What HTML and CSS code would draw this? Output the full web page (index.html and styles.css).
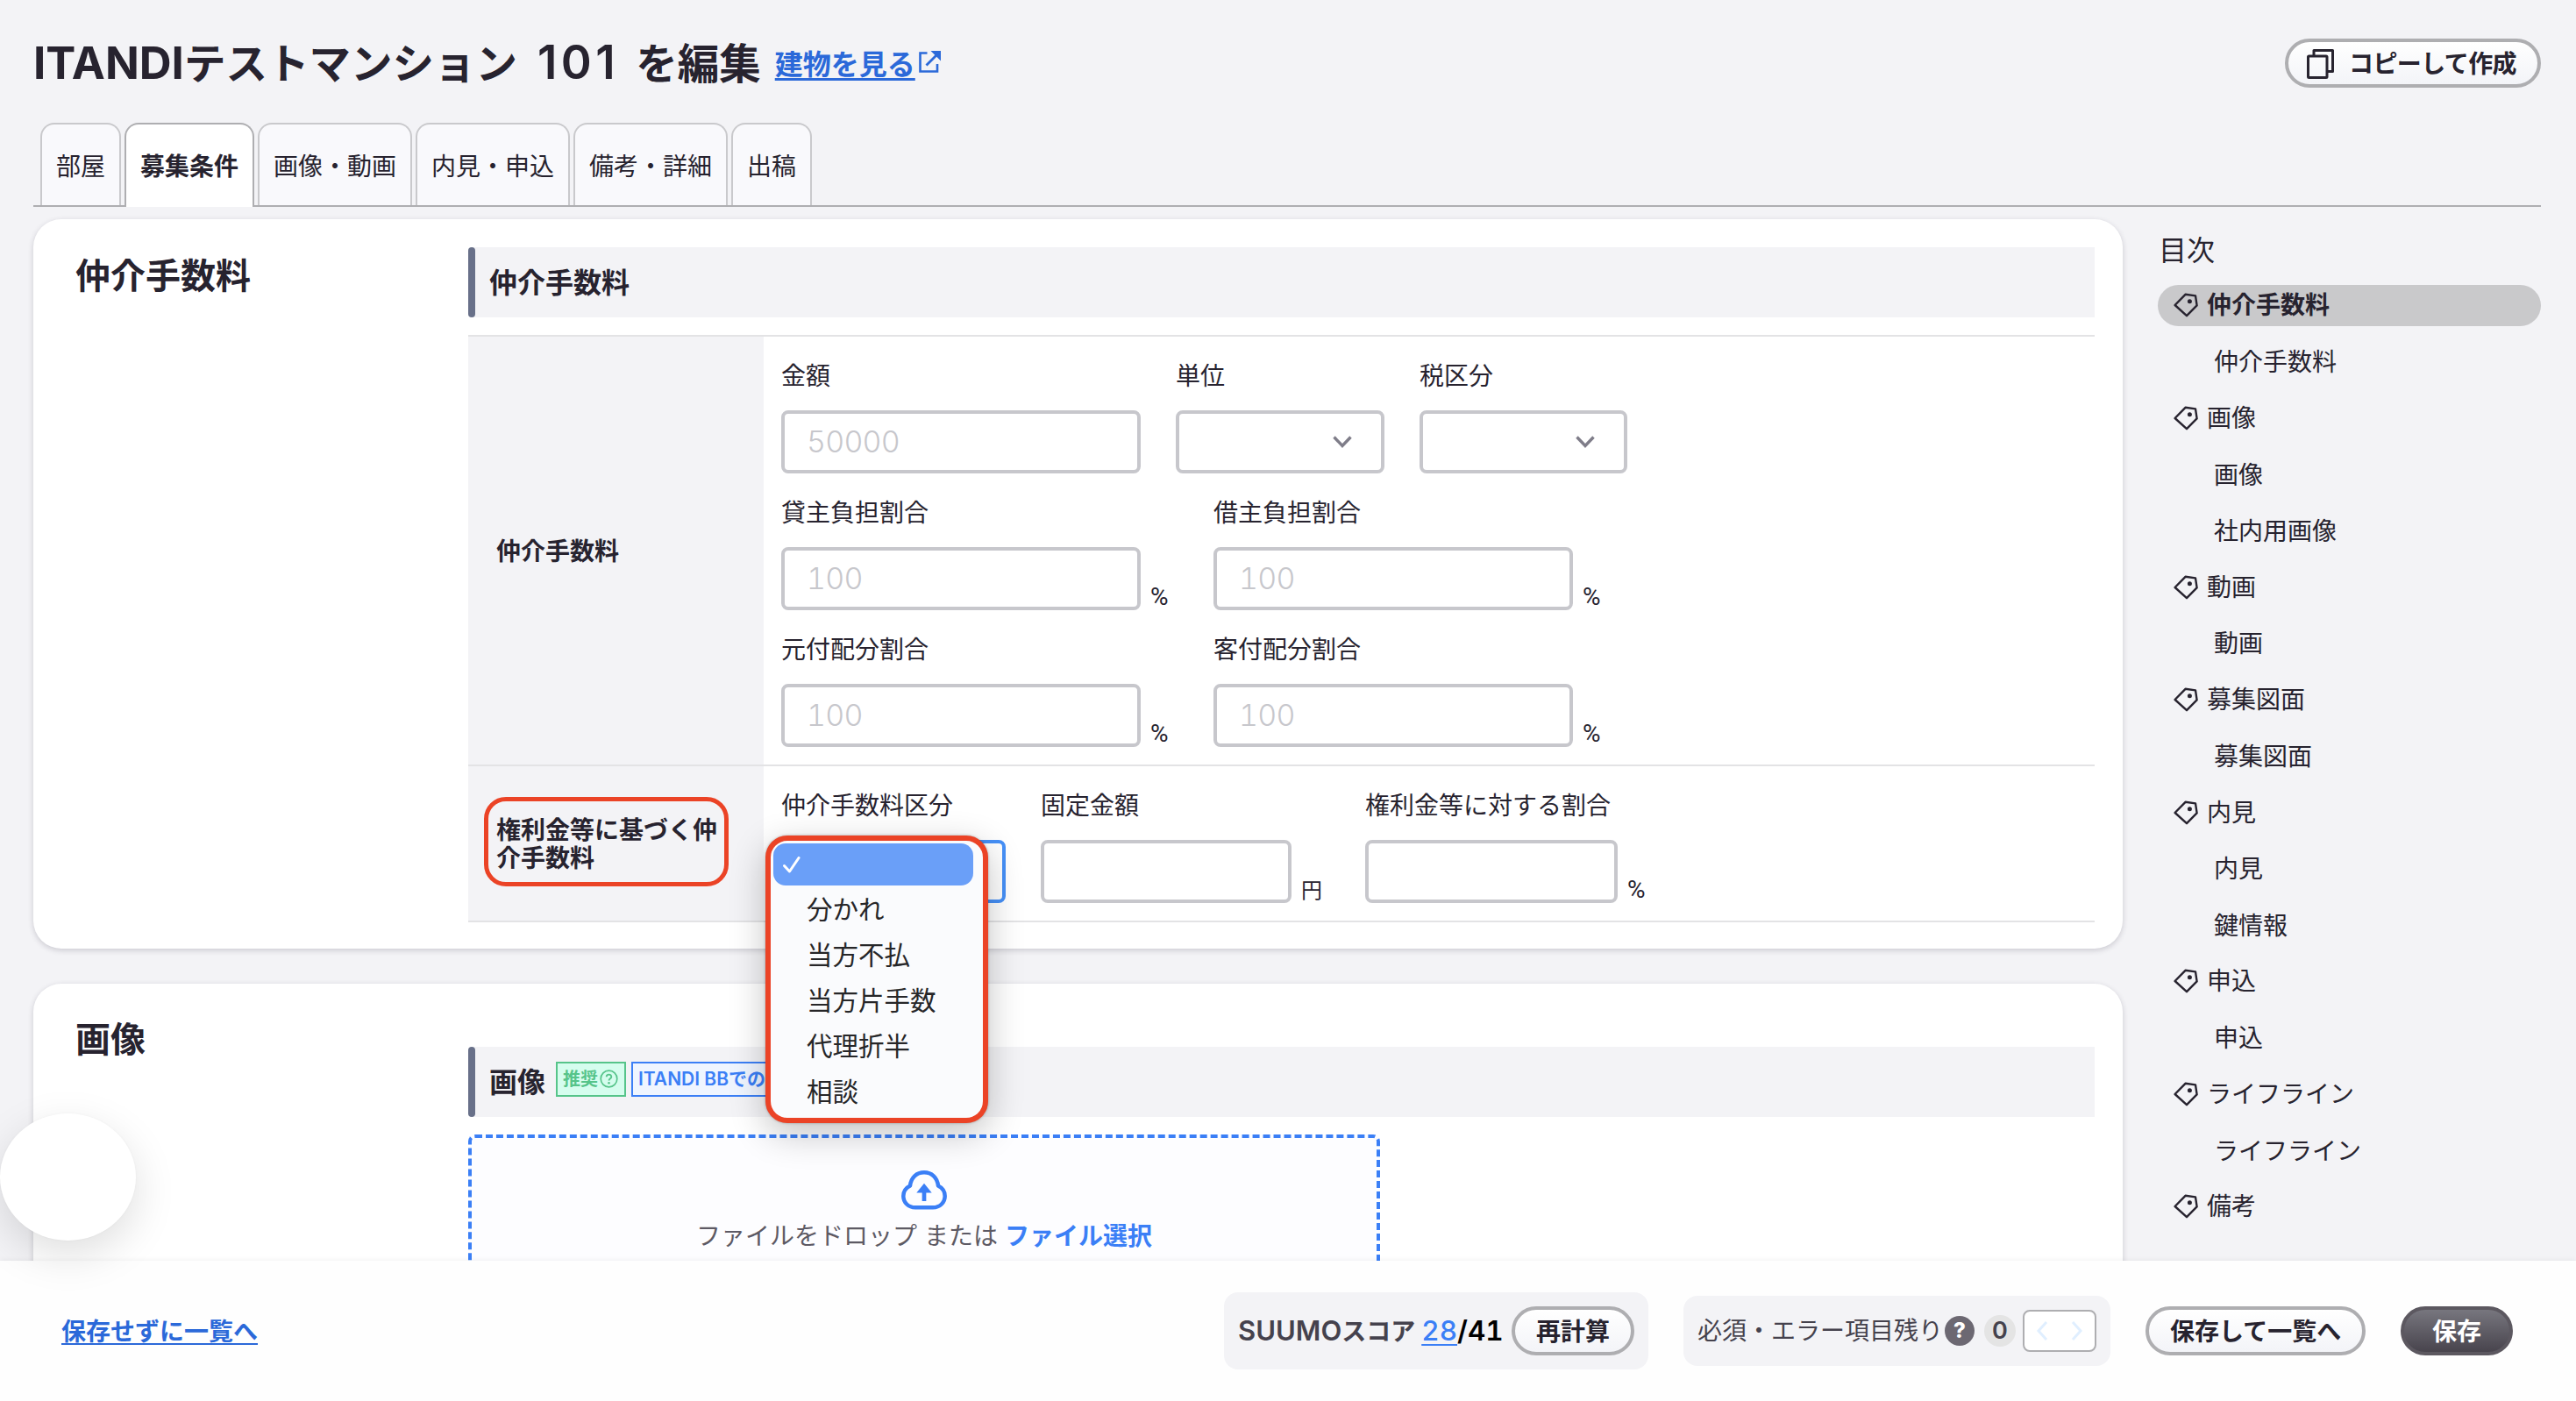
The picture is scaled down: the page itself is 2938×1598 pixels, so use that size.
FILE: index.html
```html
<!DOCTYPE html>
<html lang="ja">
<head>
<meta charset="utf-8">
<title>ITANDIテストマンション 101 を編集</title>
<link rel="stylesheet" href="styles.css">
</head>
<body>
<svg class="sprite" width="0" height="0" aria-hidden="true">
  <symbol id="tag" viewBox="0 0 28 28"><path d="M1.6 14 13.5 1.8 25 3.4 26.6 14.4 15 26.2Z" fill="none" stroke="currentColor" stroke-width="2.4" stroke-linejoin="round"/><circle cx="18.4" cy="9.8" r="2.5" fill="currentColor"/></symbol>
  <symbol id="chevron" viewBox="0 0 24 16"><path d="M2.5 2.5 12 12.5 21.500 2.500" fill="none" stroke="currentColor" stroke-width="3.4"/></symbol>
</svg>

<div class="page">
  <header class="header">
    <h1 class="title"><span class="title-latin">ITANDI</span>テストマンション<span class="title-number">101</span>を編集</h1>
    <a class="building-link"><span>建物を見る</span><svg width="25" height="25" viewBox="0 0 25 25"><path d="M9.500 2.500H1.500V23.500H21V15" fill="none" stroke="currentColor" stroke-width="2.600"/><path d="M8.500 16.500 21 4" fill="none" stroke="currentColor" stroke-width="2.800"/><path d="M13.500 0H25V11.500Z" fill="currentColor"/></svg></a>
    <button class="button copy-button"><svg width="31" height="34" viewBox="0 0 31 34"><path d="M8 7V1.500H29.500V25.500H24" fill="none" stroke="currentColor" stroke-width="3" stroke-linejoin="round"/><rect x="1.500" y="8" width="21.500" height="24.500" rx="1" fill="none" stroke="currentColor" stroke-width="3"/></svg>コピーして作成</button>
  </header>

  <nav class="tabs">
    <a class="tab">部屋</a>
    <a class="tab active">募集条件</a>
    <a class="tab">画像・動画</a>
    <a class="tab">内見・申込</a>
    <a class="tab">備考・詳細</a>
    <a class="tab">出稿</a>
  </nav>

  <div class="content">
    <main class="cards">
      <section class="card fee-card">
        <h2 class="card-title">仲介手数料</h2>
        <div class="card-body">
          <h3 class="section-title">仲介手数料</h3>
          <div class="table">
            <div class="row">
              <div class="row-label">仲介手数料</div>
              <div class="row-fields">
                <div class="fields fields-amount">
                  <div class="field"><label>金額</label><div class="input">50000</div></div>
                  <div class="field"><label>単位</label><div class="input select"><svg class="chevron"><use href="#chevron"/></svg></div></div>
                  <div class="field"><label>税区分</label><div class="input select"><svg class="chevron"><use href="#chevron"/></svg></div></div>
                </div>
                <div class="fields fields-ratio">
                  <div class="field"><label>貸主負担割合</label><div class="with-unit"><div class="input">100</div><span class="unit">%</span></div></div>
                  <div class="field"><label>借主負担割合</label><div class="with-unit"><div class="input">100</div><span class="unit">%</span></div></div>
                </div>
                <div class="fields fields-ratio">
                  <div class="field"><label>元付配分割合</label><div class="with-unit"><div class="input">100</div><span class="unit">%</span></div></div>
                  <div class="field"><label>客付配分割合</label><div class="with-unit"><div class="input">100</div><span class="unit">%</span></div></div>
                </div>
              </div>
            </div>
            <div class="row">
              <div class="row-label"><span class="callout"></span>権利金等に基づく仲<br>介手数料</div>
              <div class="row-fields">
                <div class="fields fields-key">
                  <div class="field">
                    <label>仲介手数料区分</label>
                    <div class="input focused"></div>
                    <ul class="menu">
                      <li class="selected"><svg width="20" height="19" viewBox="0 0 20 19"><path d="M1.500 10.500 7.500 17 18 1.500" fill="none" stroke="#fff" stroke-width="3" stroke-linecap="round" stroke-linejoin="round"/></svg></li>
                      <li>分かれ</li>
                      <li>当方不払</li>
                      <li>当方片手数</li>
                      <li>代理折半</li>
                      <li>相談</li>
                    </ul>
                  </div>
                  <div class="field"><label>固定金額</label><div class="with-unit"><div class="input fixed"></div><span class="unit yen">円</span></div></div>
                  <div class="field"><label>権利金等に対する割合</label><div class="with-unit"><div class="input rate"></div><span class="unit">%</span></div></div>
                </div>
              </div>
            </div>
          </div>
        </div>
      </section>

      <section class="card image-card">
        <h2 class="card-title">画像</h2>
        <div class="card-body">
          <h3 class="section-title">画像
            <span class="badge green">推奨<svg width="21" height="21" viewBox="0 0 21 21"><circle cx="10.500" cy="10.500" r="9.300" fill="none" stroke="currentColor" stroke-width="1.700"/><path d="M7.700 8.300C7.700 4.800 13.300 4.800 13.300 8.200 13.300 10.200 10.500 10.300 10.500 12.500" fill="none" stroke="currentColor" stroke-width="1.900"/><circle cx="10.500" cy="15.200" r="1.300" fill="currentColor"/></svg></span>
            <span class="badge blue">ITANDI BBでの</span>
          </h3>
          <div class="dropzone">
            <svg width="52" height="45" viewBox="0 0 52 45"><path d="M16 42.300C8 42.300 2.300 36.500 2.300 29.300 2.300 24.300 5 20 10 17.500 11 8 17.500 2.300 26 2.300S41 8 42 17.500C47 20 49.700 24.300 49.700 29.300 49.700 36.500 44 42.300 36 42.300Z" fill="none" stroke="currentColor" stroke-width="4.500" stroke-linejoin="round"/><path d="M26 35V23" stroke="currentColor" stroke-width="4.700"/><path d="M17.300 25.500 26 14.700 34.700 25.500Z" fill="currentColor"/></svg>
            <p>ファイルをドロップ または <b>ファイル選択</b></p>
          </div>
        </div>
      </section>
    </main>

    <aside class="toc">
      <h2 class="toc-title">目次</h2>
      <a class="toc-item active"><svg><use href="#tag"/></svg>仲介手数料</a>
      <a class="toc-item sub">仲介手数料</a>
      <a class="toc-item"><svg><use href="#tag"/></svg>画像</a>
      <a class="toc-item sub">画像</a>
      <a class="toc-item sub">社内用画像</a>
      <a class="toc-item"><svg><use href="#tag"/></svg>動画</a>
      <a class="toc-item sub">動画</a>
      <a class="toc-item"><svg><use href="#tag"/></svg>募集図面</a>
      <a class="toc-item sub">募集図面</a>
      <a class="toc-item"><svg><use href="#tag"/></svg>内見</a>
      <a class="toc-item sub">内見</a>
      <a class="toc-item sub">鍵情報</a>
      <a class="toc-item"><svg><use href="#tag"/></svg>申込</a>
      <a class="toc-item sub">申込</a>
      <a class="toc-item"><svg><use href="#tag"/></svg>ライフライン</a>
      <a class="toc-item sub">ライフライン</a>
      <a class="toc-item"><svg><use href="#tag"/></svg>備考</a>
    </aside>
  </div>
</div>

<footer class="footer">
  <a class="leave-link">保存せずに一覧へ</a>
  <div class="panel score">
    <span class="score-name">SUUMO<span>スコア</span></span>
    <span class="score-value"><a>28</a>/41</span>
    <button class="button">再計算</button>
  </div>
  <div class="panel errors">
    <span>必須・エラー項目残り</span>
    <span class="help">?</span>
    <span class="count">0</span>
    <span class="pager"><svg width="14" height="22" viewBox="0 0 14 22"><path d="M12 1 3 11 12 21" fill="none" stroke="currentColor" stroke-width="3"/></svg><svg width="14" height="22" viewBox="0 0 14 22"><path d="M2 1 11 11 2 21" fill="none" stroke="currentColor" stroke-width="3"/></svg></span>
  </div>
  <button class="button save-list">保存して一覧へ</button>
  <button class="button dark">保存</button>
</footer>
<div class="bubble"></div>
</body>
</html>
```

FILE: styles.css
```css
* { box-sizing: border-box; }

body {
  margin: 0;
  height: 1598px;
  display: flex;
  flex-direction: column;
  overflow: hidden;
  background: #f3f3f6;
  color: #27232f;
  font-family: Inter, "Noto Sans CJK JP", sans-serif;
  font-size: 28px;
  line-height: 40px;
}

h1, h2, h3, p, ul { margin: 0; padding: 0; }
svg { display: block; flex: none; }
.sprite { position: absolute; }

.page {
  height: 1438px;
  flex: none;
  padding: 44px 40px 0 38px;
  overflow: hidden;
}

/* Header */
.header { display: flex; align-items: center; height: 56px; }
.title { font-size: 47.5px; line-height: 56px; font-weight: 700; white-space: nowrap; }
.title-latin { font-size: 51px; }
.title-number { font-size: 53px; font-weight: 600; letter-spacing: 4.5px; margin: 0 19px 0 23px; }
.building-link {
  display: flex;
  gap: 4px;
  margin-left: 16px;
  padding-top: 4px;
  color: #2b69d9;
  font-size: 32px;
  font-weight: 700;
}
.building-link svg { margin-top: 4px; }
.building-link span { text-decoration: underline; text-decoration-thickness: 3px; text-underline-offset: 4px; }

.button {
  height: 56px;
  padding: 1px 24px 0;
  border: 4px solid #aeaeb1;
  border-radius: 28px;
  background: linear-gradient(#fff, #f3f4f8);
  color: #27232f;
  font: 700 28px/40px Inter, "Noto Sans CJK JP", sans-serif;
  white-space: nowrap;
}
.copy-button {
  display: flex;
  align-items: center;
  gap: 17px;
  width: 292px;
  margin-left: auto;
  padding: 1px 0 0 21px;
  letter-spacing: -.6px;
}

/* Tabs */
.tabs {
  display: flex;
  gap: 4px;
  height: 96px;
  margin-top: 40px;
  padding-left: 8px;
  border-bottom: 2px solid #aeaeb1;
}
.tab {
  height: 94px;
  padding: 0 16px;
  border: 2px solid #c9c9cc;
  border-bottom: 0;
  border-radius: 16px 16px 0 0;
  background: #f9f9fc;
  line-height: 96px;
}
.tab.active { height: 96px; background: #fff; border-color: #aeaeb1; font-weight: 700; }

/* Cards */
.content { display: flex; gap: 40px; margin-top: 14px; }
.cards { display: flex; flex-direction: column; gap: 40px; width: 2383px; }
.card {
  display: flex;
  border-radius: 32px;
  background: #fff;
  box-shadow: 0 2px 6px rgba(39, 35, 60, .2);
}
.fee-card { height: 832px; padding: 32px 32px 0 48px; }
.image-card { height: 500px; padding: 32px 32px 0 48px; }
.image-card .card-body { padding-top: 40px; }
.image-card .card-title { line-height: 64px; }
.card-title { width: 448px; font-size: 40px; line-height: 65px; font-weight: 700; }
.card-body { flex: 1; }
.section-title {
  display: flex;
  align-items: center;
  height: 80px;
  padding: 1px 0 0 24px;
  background: linear-gradient(90deg, #fff 4px, #f3f3f6 4px);
  font-size: 32px;
  font-weight: 700;
  position: relative;
}
.section-title::before {
  content: "";
  position: absolute;
  left: 0;
  top: 0;
  width: 8px;
  height: 80px;
  border-radius: 4px;
  background: #687089;
}

.table { margin-top: 20px; border-top: 2px solid #e3e3e5; }
.row { display: flex; border-bottom: 2px solid #e3e3e5; }
.row-label {
  position: relative;
  width: 337px;
  padding: 1px 0 0 32px;
  background: #f3f3f6;
  font-weight: 700;
  line-height: 32px;
  display: grid;
  align-content: center;
  white-space: nowrap;
}
.row-fields { display: flex; flex-direction: column; gap: 24px; padding: 24px 0 20px 20px; }
.fields { display: grid; }
.fields-amount { grid-template-columns: 410px 238px 237px; gap: 40px; }
.fields-ratio { grid-template-columns: 493px auto; }
.fields-ratio .input { width: 410px; }
.fields-key { grid-template-columns: 296px 370px auto; }
.field { position: relative; }
.field label { display: block; height: 40px; margin-bottom: 20px; line-height: 42px; white-space: nowrap; }
.input {
  height: 72px;
  padding-left: 25px;
  border: 4px solid #c7c7cc;
  border-radius: 8px;
  background: #fff;
  color: #c7c7cc;
  font-size: 34px;
  font-weight: 300;
  line-height: 64px;
  letter-spacing: -.8px;
  font-variant-numeric: tabular-nums;
}
.select { display: flex; align-items: center; justify-content: flex-end; padding-right: 32px; }
.chevron { width: 24px; height: 16px; color: #7f7d89; }
.focused { width: 256px; border-color: #4690f7; }
.fixed { width: 286px; }
.rate { width: 288px; }
.with-unit { display: flex; gap: 11px; align-items: flex-end; }
.unit { font-family: Roboto, sans-serif; font-size: 28px; line-height: 30px; }
.yen { font-family: "Noto Sans CJK JP", sans-serif; font-size: 24px; line-height: 32px; }

.callout {
  position: absolute;
  left: 18px;
  top: 35px;
  width: 279px;
  height: 102px;
  border: 5px solid #eb4326;
  border-radius: 25px;
}

.menu {
  position: absolute;
  z-index: 2;
  left: -18px;
  top: 55px;
  width: 254px;
  height: 328px;
  padding: 3px;
  border: 6px solid #eb4326;
  border-radius: 25px;
  background: #fafbfd;
  box-shadow: 0 12px 40px rgba(0, 0, 0, .24), 0 0 3px rgba(0, 0, 0, .3);
  color: #262628;
  font-size: 29.5px;
  list-style: none;
}
.menu li { height: 52px; padding-left: 38px; line-height: 52px; }
.menu .selected {
  display: flex;
  align-items: center;
  width: 228px;
  height: 48px;
  margin-bottom: 1px;
  padding-left: 11px;
  border-radius: 14px;
  background: #6a9ff8;
}

.badge {
  display: flex;
  align-items: center;
  gap: 2px;
  height: 40px;
  margin: 0 0 7px 12px;
  padding: 0 6px 1px;
  border: 2px solid;
  font-size: 20px;
  white-space: nowrap;
}
.green { width: 80px; border-color: #56c48a; background: #d5fdee; color: #56c48a; }
.blue { margin-left: 6px; width: 200px; border-color: #3b7ff6; background: #eff5ff; color: #3b7ff6; font-size: 21px; font-weight: 600; }

.dropzone {
  display: flex;
  flex-direction: column;
  align-items: center;
  width: 1040px;
  height: 220px;
  margin-top: 20px;
  padding-top: 37px;
  border: 4px dashed #3b7ff6;
  border-radius: 8px;
  background: #fdfdff;
  color: #3b7ff6;
}
.dropzone p { margin-top: 10px; color: #5d5a64; white-space: nowrap; }
.dropzone b { color: #3b7ff6; }

/* Table of contents */
.toc { width: 437px; padding-top: 16px; }
.toc-title { margin: 0 0 19px 1px; font-size: 32px; line-height: 40px; font-weight: 400; }
.toc-item {
  display: flex;
  align-items: center;
  gap: 10px;
  height: 46.5px;
  margin-bottom: 17.75px;
  padding-left: 18px;
  border-radius: 24px;
}
.toc-item svg { width: 28px; height: 28px; }
.toc-item.active { background: #c9c9cb; font-weight: 700; }
.toc-item.sub { padding: 1px 0 0 64px; }

/* Footer */
.footer {
  display: flex;
  align-items: center;
  height: 160px;
  padding: 0 72px 0 70px;
  background: #fefefe;
  box-shadow: 0 0 6px rgba(0, 0, 0, .08);
  white-space: nowrap;
  z-index: 1;
}
.leave-link { padding-top: 2px; color: #2b69d9; font-weight: 700; text-decoration: underline; text-decoration-thickness: 2px; text-underline-offset: 3px; }
.panel { display: flex; align-items: center; border-radius: 16px; background: #f3f3f6; color: #45424d; }
.score { width: 484px; height: 88px; margin-left: auto; padding: 0 16px; }
.score-name { font-size: 31px; font-weight: 600; }
.score-name span { font-size: 28px; font-weight: 700; }
.score-value { margin-left: 7px; color: #000; font-size: 31.5px; font-weight: 600; font-variant-numeric: tabular-nums; }
.score-value a { color: #3b7ff6; font-weight: 500; text-decoration: underline; text-decoration-thickness: 2px; text-underline-offset: 4px; }
.score .button { width: 140px; margin-left: auto; }
.errors { width: 487px; height: 80px; margin-left: 40px; padding: 0 16px; }
.help {
  width: 34px;
  height: 34px;
  margin-left: 2px;
  border-radius: 50%;
  background: #6c6872;
  color: #fff;
  font-size: 24px;
  font-weight: 800;
  line-height: 34px;
  text-align: center;
}
.count {
  width: 36px;
  height: 36px;
  margin-left: 11px;
  border-radius: 50%;
  background: #e4e4e4;
  font-size: 27px;
  font-weight: 600;
  line-height: 36px;
  text-align: center;
}
.pager {
  display: flex;
  align-items: center;
  justify-content: space-between;
  width: 84px;
  height: 48px;
  margin-left: auto;
  padding: 0 13px;
  border: 2px solid #aeaeb1;
  border-radius: 8px;
  background: #fff;
  color: #e0efff;
}
.save-list { width: 251px; margin-left: 40px; }
.dark { width: 128px; margin-left: 40px; border-color: #5c5860; background: linear-gradient(#77767e, #48444d); color: #fff; }

.bubble {
  position: absolute;
  z-index: 2;
  left: 0;
  top: 1270px;
  width: 155px;
  height: 145px;
  border-radius: 50%;
  background: #fff;
  box-shadow: 0 16px 48px rgba(0, 0, 0, .13), 0 0 3px rgba(0, 0, 0, .04);
}
```
